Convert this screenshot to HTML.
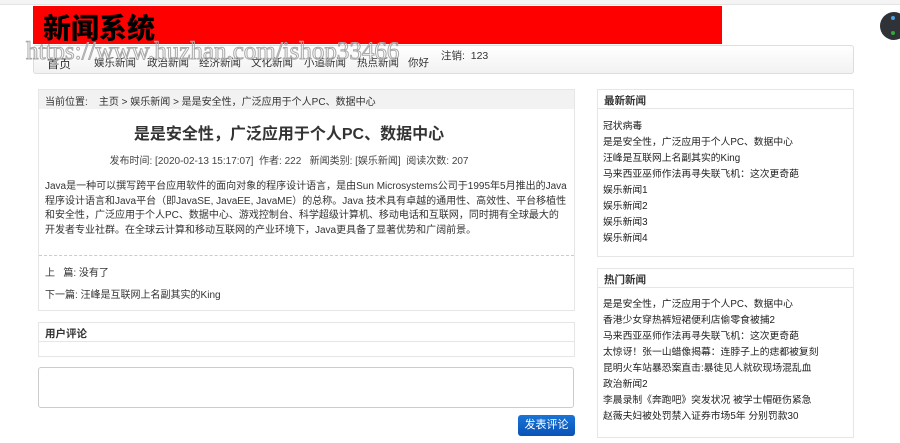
<!DOCTYPE html>
<html><head><meta charset="utf-8"><style>
*{margin:0;padding:0;box-sizing:border-box}
body{width:900px;height:443px;background:#fff;font-family:"Liberation Sans","Noto Sans CJK SC",sans-serif;font-size:10px;color:#333;position:relative;overflow:hidden}
.a{position:absolute}
.red{left:33px;top:6px;width:689px;height:38px;background:#f00}
.red span{position:absolute;left:10px;top:1px;font-size:28px;font-weight:900;color:#000;font-family:"Noto Sans CJK SC",sans-serif;letter-spacing:0px}
.nav{left:33px;top:45px;width:821px;height:29px;border:1px solid #ddd;border-radius:3px;background:linear-gradient(#fff,#f2f2f2)}
.nav span{position:absolute;top:9px;font-size:10.5px;color:#333}
.wm{left:26px;top:38px;font-family:"Liberation Serif",serif;font-size:25px;color:transparent;-webkit-text-stroke:1px #aaa;white-space:nowrap}
.box{border:1px solid #e6e6e6}
.hd{font-weight:bold;font-size:10.5px;color:#333;padding:3px 6px;border-bottom:1px solid #e6e6e6;height:19px}
.li{position:absolute;left:5px;font-size:9.8px;color:#222;white-space:nowrap}
</style></head><body>
<div class="a" style="left:0;top:0;width:900px;height:5px;background:#f4f4f4;border-bottom:1px solid #e4e4e4"></div>
<div class="a red"><span>新闻系统</span></div>
<div class="a nav">
<span style="left:13px;font-size:12px">首页</span><span style="left:60px">娱乐新闻</span><span style="left:113px">政治新闻</span><span style="left:165px">经济新闻</span><span style="left:217px">文化新闻</span><span style="left:270px">小道新闻</span><span style="left:323px">热点新闻</span><span style="left:374px">你好</span>
<span style="left:407px;top:2px">注销:&nbsp;&nbsp;123</span>
</div>
<div class="a" style="left:880px;top:12px;width:28px;height:28px;border-radius:50%;background:#2f3338"></div>
<div class="a" style="left:891px;top:16px;width:4px;height:4px;background:#4aa3e8;border-radius:50%"></div>
<div class="a" style="left:891px;top:31px;width:4px;height:4px;background:#3a3;border-radius:50%"></div>

<div class="a box" style="left:38px;top:89px;width:537px;height:222px">
<div style="background:#f2f2f2;height:19px;padding:3px 6px;font-size:10px">当前位置:&nbsp;&nbsp;&nbsp;&nbsp;主页 &gt; 娱乐新闻 &gt; 是是安全性，广泛应用于个人PC、数据中心</div>
<div class="a" style="left:0;top:30px;width:500px;text-align:center;font-size:16px;font-weight:bold;color:#333">是是安全性，广泛应用于个人PC、数据中心</div>
<div class="a" style="left:0;top:62px;width:500px;text-align:center;font-size:10px;color:#444">发布时间:&nbsp;[2020-02-13 15:17:07]&nbsp;&nbsp;作者:&nbsp;222&nbsp;&nbsp;&nbsp;新闻类别:&nbsp;[娱乐新闻]&nbsp;&nbsp;阅读次数:&nbsp;207</div>
<div class="a" style="left:6px;top:90px;width:522px;font-size:10px;line-height:14.7px;color:#333">Java是一种可以撰写跨平台应用软件的面向对象的程序设计语言，是由Sun Microsystems公司于1995年5月推出的Java程序设计语言和Java平台（即JavaSE, JavaEE, JavaME）的总称。Java 技术具有卓越的通用性、高效性、平台移植性和安全性，广泛应用于个人PC、数据中心、游戏控制台、科学超级计算机、移动电话和互联网，同时拥有全球最大的开发者专业社群。在全球云计算和移动互联网的产业环境下，Java更具备了显著优势和广阔前景。</div>
<div class="a" style="left:0;top:165px;width:535px;border-top:1px dashed #ccc"></div>
<div class="a" style="left:6px;top:174px;font-size:10px">上&nbsp;&nbsp;&nbsp;篇:&nbsp;没有了</div>
<div class="a" style="left:6px;top:196px;font-size:10px">下一篇:&nbsp;汪峰是互联网上名副其实的King</div>
</div>

<div class="a box" style="left:38px;top:322px;width:537px;height:35px"><div class="hd">用户评论</div></div>
<div class="a" style="left:38px;top:367px;width:536px;height:41px;border:1px solid #ccc;border-radius:3px"></div>
<div class="a" style="left:518px;top:415px;width:57px;height:21px;background:linear-gradient(#1a74d6,#0a52b8);border-radius:3px;color:#fff;font-size:11px;text-align:center;line-height:21px">发表评论</div>

<div class="a box" style="left:597px;top:89px;width:257px;height:168px">
<div class="hd">最新新闻</div>
<div class="li" style="top:28px">冠状病毒</div>
<div class="li" style="top:44px">是是安全性，广泛应用于个人PC、数据中心</div>
<div class="li" style="top:60px">汪峰是互联网上名副其实的King</div>
<div class="li" style="top:76px">马来西亚巫师作法再寻失联飞机：这次更奇葩</div>
<div class="li" style="top:92px">娱乐新闻1</div>
<div class="li" style="top:108px">娱乐新闻2</div>
<div class="li" style="top:124px">娱乐新闻3</div>
<div class="li" style="top:140px">娱乐新闻4</div>
</div>
<div class="a box" style="left:597px;top:268px;width:257px;height:170px">
<div class="hd">热门新闻</div>
<div class="li" style="top:27px">是是安全性，广泛应用于个人PC、数据中心</div>
<div class="li" style="top:43px">香港少女穿热裤短裙便利店偷零食被捕2</div>
<div class="li" style="top:59px">马来西亚巫师作法再寻失联飞机：这次更奇葩</div>
<div class="li" style="top:75px">太惊讶！张一山蜡像揭幕：连脖子上的痣都被复刻</div>
<div class="li" style="top:91px">昆明火车站暴恐案直击:暴徒见人就砍现场混乱血</div>
<div class="li" style="top:107px">政治新闻2</div>
<div class="li" style="top:123px">李晨录制《奔跑吧》突发状况 被学士帽砸伤紧急</div>
<div class="li" style="top:139px">赵薇夫妇被处罚禁入证券市场5年 分别罚款30</div>
</div>
<div class="a wm">https://www.huzhan.com/ishop33466</div>
</body></html>
